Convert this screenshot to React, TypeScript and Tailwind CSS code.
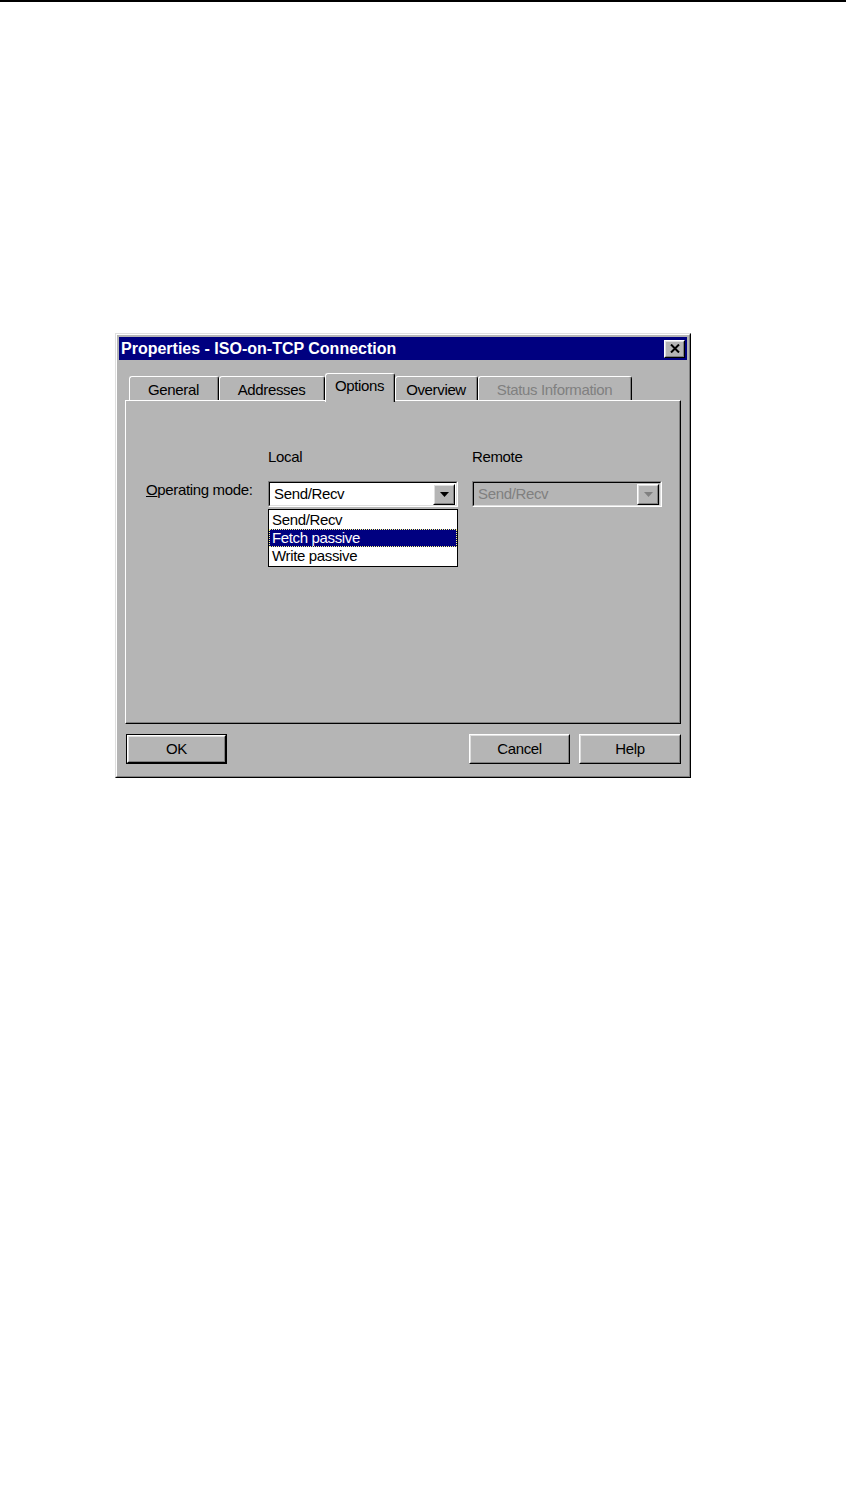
import React from 'react'

const font = "font-['Liberation_Sans',Arial,sans-serif]"

function Raised({ className = '', children }: { className?: string; children?: React.ReactNode }) {
    return (
        <div className={`border border-t-white border-l-white border-r-black border-b-black ${className}`}>
            <div className="flex h-full w-full items-center justify-center border border-t-[#dfdfdf] border-l-[#dfdfdf] border-r-[#808080] border-b-[#808080]">
                {children}
            </div>
        </div>
    )
}

function Sunken({ className = '', children }: { className?: string; children?: React.ReactNode }) {
    return (
        <div className={`border border-t-[#808080] border-l-[#808080] border-r-white border-b-white ${className}`}>
            <div className="flex h-full w-full items-center border border-t-black border-l-black border-r-[#dfdfdf] border-b-[#dfdfdf]">
                {children}
            </div>
        </div>
    )
}

function Arrow({ color }: { color: string }) {
    return (
        <svg width="9" height="5" viewBox="0 0 9 5">
            <path d="M0 0h9L4.5 5z" fill={color} />
        </svg>
    )
}

function Tab({ label, active, disabled, width }: { label: string; active?: boolean; disabled?: boolean; width: string }) {
    return (
        <div
            className={`${width} ${active ? 'relative z-10 h-[29px] bg-[#b5b5b5]' : 'mt-[3px] h-[24px]'} rounded-t-[3px] border-l border-t border-r border-l-white border-t-white border-r-black`}
        >
            <div className={`flex h-full justify-center rounded-tr-[2px] border-r border-r-[#808080] ${active ? 'pt-[3px]' : 'pt-[4px]'}`}>
                <span className={`text-[15px] leading-[18px] ${disabled ? 'text-[#808080]' : 'text-black'}`}>{label}</span>
            </div>
        </div>
    )
}

export default function App() {
    return (
        <div className={`h-[1498px] w-[852px] bg-white ${font}`}>
            <div className="h-[2px] w-[846px] bg-black" />

            <div className="ml-[115px] mt-[331px] h-[445px] w-[576px] border border-t-[#dfdfdf] border-l-[#dfdfdf] border-r-black border-b-black">
                <div className="flex h-full flex-col border border-t-white border-l-white border-r-[#808080] border-b-[#808080] bg-[#b5b5b5] p-[2px] tracking-[-0.35px]">
                    {/* title bar */}
                    <div className="flex h-[23px] items-center justify-between bg-[#000080] pl-[2px] pr-[2px]">
                        <span className="text-[16px] font-bold leading-none tracking-normal text-white">Properties - ISO-on-TCP Connection</span>
                        <Raised className="h-[18px] w-[21px] bg-[#b5b5b5]">
                            <svg width="10" height="9" viewBox="0 0 10 9">
                                <path d="M1 0.5l8 8M9 0.5l-8 8" stroke="black" strokeWidth="2" />
                            </svg>
                        </Raised>
                    </div>

                    {/* tabs + page */}
                    <div className="mt-[13px] px-[6px]">
                        <div className="flex h-[27px] items-start pl-[4px]">
                            <Tab label="General" width="w-[90px]" />
                            <Tab label="Addresses" width="w-[106px]" />
                            <Tab label="Options" width="w-[70px]" active />
                            <Tab label="Overview" width="w-[83px]" />
                            <Tab label="Status Information" width="w-[154px]" disabled />
                        </div>

                        <div className="h-[324px] border border-t-white border-l-white border-r-black border-b-black">
                            <div className="relative h-full border-r border-b border-r-[#808080] border-b-[#808080] pl-[20px] pt-[47px]">
                                <div className="grid grid-cols-[108px_190px_190px] gap-x-[14px] gap-y-[15px] text-[15px] leading-[18px]">
                                    <div />
                                    <div>Local</div>
                                    <div>Remote</div>

                                    <div>
                                        <span className="underline">O</span>perating mode:
                                    </div>
                                    <div className="relative">
                                        <Sunken className="h-[26px] bg-white">
                                            <span className="ml-[4px] flex-1">Send/Recv</span>
                                            <Raised className="mr-[1px] h-[21px] w-[22px] bg-[#b5b5b5]">
                                                <Arrow color="black" />
                                            </Raised>
                                        </Sunken>
                                        <div className="absolute left-0 top-[28px] z-20 w-[190px] border border-black bg-white py-[1px]">
                                            <div className="h-[18px] pl-[3px]">Send/Recv</div>
                                            <div className="h-[18px] border border-dotted border-[#ffff80] bg-[#000080] pl-[2px] leading-[16px] text-white">Fetch passive</div>
                                            <div className="h-[18px] pl-[3px]">Write passive</div>
                                        </div>
                                    </div>
                                    <div>
                                        <Sunken className="h-[26px] bg-[#b5b5b5]">
                                            <span className="ml-[4px] flex-1 text-[#808080]">Send/Recv</span>
                                            <Raised className="mr-[1px] h-[21px] w-[22px] bg-[#b5b5b5]">
                                                <Arrow color="#808080" />
                                            </Raised>
                                        </Sunken>
                                    </div>
                                </div>
                            </div>
                        </div>
                    </div>

                    {/* buttons */}
                    <div className="mt-[10px] flex justify-between pl-[7px] pr-[6px] text-[15px]">
                        <div className="h-[30px] w-[101px] border border-black">
                            <Raised className="h-full w-full">OK</Raised>
                        </div>
                        <div className="flex gap-[9px]">
                            <Raised className="h-[30px] w-[101px]">Cancel</Raised>
                            <Raised className="h-[30px] w-[102px]">Help</Raised>
                        </div>
                    </div>
                </div>
            </div>
        </div>
    )
}
